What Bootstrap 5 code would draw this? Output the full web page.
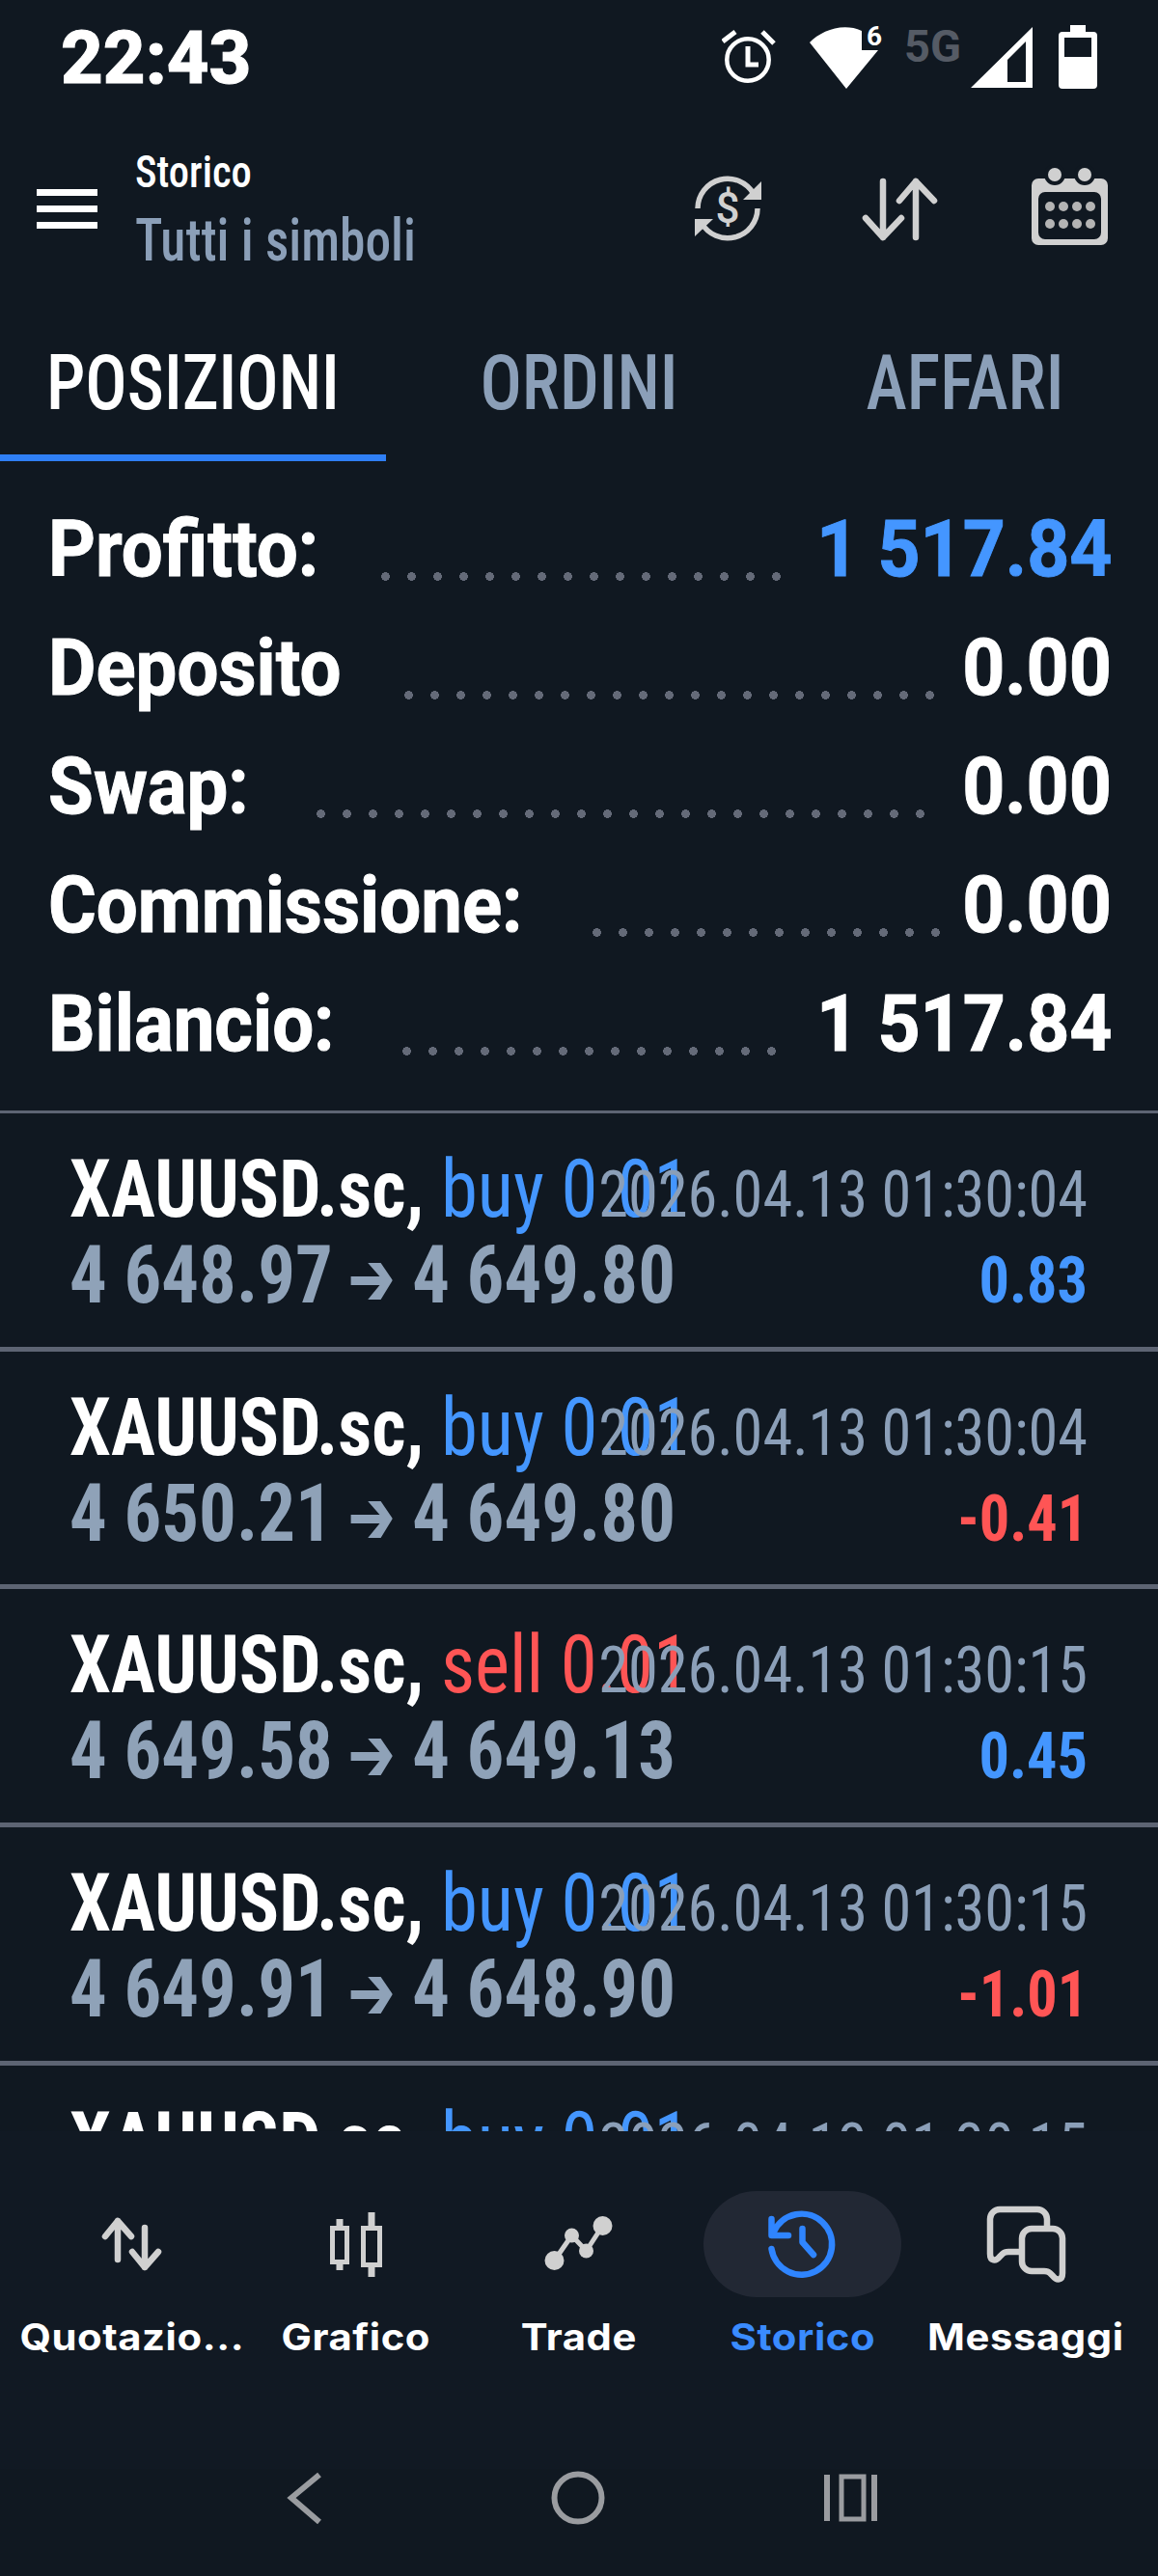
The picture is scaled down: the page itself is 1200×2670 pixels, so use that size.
<!DOCTYPE html>
<html lang="it">
<head>
  <meta charset="UTF-8">
  <meta name="viewport" content="width=device-width, initial-scale=1">
  <title>Storico</title>
  <link href="https://cdn.jsdelivr.net/npm/bootstrap@5.3.0/dist/css/bootstrap.min.css" rel="stylesheet">
  <style>
    html, body { background: #101821; }
    body { width: 1200px; height: 2670px; overflow: hidden; font-family: Roboto, "Liberation Sans", sans-serif; color: #fff; }
    svg { display: block; flex: none; }
    .cnd { font-stretch: 75%; }
    /* the app's font is narrower than Roboto's 75% width */
    .sq-l { display: inline-block; transform: scaleX(.925); transform-origin: 0 50%; }
    .sq-r { display: inline-block; transform: scaleX(.93); transform-origin: 100% 50%; }

    .stat-bar { height: 128px; padding: 26px 63px 0 63px; }
    .stat-time { font-size: 76px; font-weight: 800; line-height: 68px; -webkit-text-stroke: 1px #fff; }
    .ic-alarm { margin: 4px 35px 0 0; }
    .net-label { font-size: 47px; font-weight: 700; line-height: 44px; color: #555b65; width: 57px; margin: 0 12px 0 23px; }
    .ic-batt { margin-left: 27px; }

    .app-bar { height: 176px; padding: 0 52px 0 38px; }
    .burger { width: 63px; height: 41px; margin-right: 39px; border-top: 7px solid #fff; border-bottom: 7px solid #fff; }
    .burger::after { content: ""; display: block; height: 7px; margin-top: 10px; background: #fff; }
    .app-text { padding-top: 6px; }
    .app-sub { font-size: 46px; font-weight: 500; line-height: 50px; }
    .app-title { font-size: 61px; font-weight: 500; line-height: 72px; margin-top: 10px; color: #8b9fb8; }
    .app-title .sq-l { transform: scaleX(.875); }
    .ic-sort { margin-left: 100px; }
    .ic-cal { margin-left: 95px; }

    .tab-item { height: 174px; font-size: 80px; font-weight: 500; line-height: 187px; color: #8b9fb8; text-align: center; }
    .tab-on { color: #fff; border-bottom: 7px solid #2f7ff5; }
    .tab-txt { display: inline-block; transform: scaleX(.9); }

    .totals { height: 673px; padding: 30px 48px 0 50px; }
    .tot-row { height: 123px; font-size: 81px; font-weight: 700; line-height: 123px; -webkit-text-stroke: 1px currentColor; }
    .tot-label { display: inline-block; transform: scaleX(.94); transform-origin: 0 50%; }
    .tot-val { display: inline-block; transform: scaleX(.95); transform-origin: 100% 50%; }
    .dot-wrap { padding-left: 26px; }
    .dots { height: 9px; margin-top: 85px; background: radial-gradient(circle 4.5px at 13.5px 4.5px, #646a78 96%, transparent) repeat-x 0 0 / 27px 9px; }
    .val-blue { color: #4496ff; }

    .trades { height: 1058px; overflow: hidden; }
    .trade { height: 246.67px; padding: 34px 73px 0 72px; border-top: 5px solid #5d6473; }
    .trade:first-child { height: 244.67px; border-top-width: 3px; }
    .line-a, .line-b { height: 89px; line-height: 89px; white-space: nowrap; }
    .tr-sym { width: 0; font-size: 83px; }
    .tr-sym b { font-weight: 700; }
    .tr-date { font-size: 67px; color: #8b9fb8; }
    .tr-price { font-size: 83px; font-weight: 700; color: #8fa2b8; }
    .tr-arrow { display: inline-block; margin: 0 22px 0 20px; vertical-align: 3px; }
    .tr-pl { font-size: 67px; font-weight: 700; }
    .side-buy, .pl-up { color: #4496ff; }
    .side-sell, .pl-down { color: #ff5555; }

    .tabbar { padding: 62px 21px 0; background: #111923; height: 350px; }
    .tab-btn { width: 231.6px; text-align: center; }
    .tab-ico { width: 205px; height: 110px; margin: 0 auto; border-radius: 55px; }
    .tab-ico-on { background: #222834; }
    .tab-lbl { font-family: Inter, "Open Sans", sans-serif; font-size: 38px; font-weight: 700; line-height: 46px; margin-top: 18px; letter-spacing: .5px; white-space: nowrap; transform: scaleX(1.1); }
    .tab-lbl-on { color: #3a8bff; }
    .sys-nav { margin-top: 112px; }
  </style>
</head>
<body>
  <!-- status bar -->
  <div class="stat-bar d-flex justify-content-between">
    <span class="stat-time">22:43</span>
    <div class="d-flex align-items-start">
      <svg class="ic-alarm" width="56" height="60" viewBox="0 0 56 60" fill="none" stroke="#fff" stroke-width="5">
        <circle cx="27" cy="32" r="21.7" stroke-width="4.5"/><path d="M27 18V37H38M1 13L14 3M42 3L54 15"/>
      </svg>
      <svg width="75" height="66" viewBox="0 0 75 66">
        <path fill="#fff" d="M38 66L0 18C12 6 34-3 54 6V26H71Z"/>
        <text x="59" y="21" font-size="28" font-weight="700" fill="#fff" font-family="Roboto">6</text>
      </svg>
      <span class="net-label">5G</span>
      <svg width="64" height="66" viewBox="0 0 64 66"><path fill="#fff" fill-rule="evenodd" d="M0 65L64 2V65ZM38 59H57V17L38 36Z"/></svg>
      <svg class="ic-batt" width="40" height="66" viewBox="0 0 40 66"><path fill="#fff" fill-rule="evenodd" d="M12 0H28V7H36A4 4 0 0 1 40 11V62A4 4 0 0 1 36 66H4A4 4 0 0 1 0 62V11A4 4 0 0 1 4 7H12ZM6 13V33H34V13Z"/></svg>
    </div>
  </div>

  <!-- app bar -->
  <div class="app-bar d-flex align-items-center">
    <div class="burger"></div>
    <div class="app-text flex-grow-1 cnd">
      <div class="app-sub"><span class="sq-l">Storico</span></div>
      <div class="app-title"><span class="sq-l">Tutti i simboli</span></div>
    </div>
    <svg width="72" height="72" viewBox="0 0 72 72" fill="none" stroke="#d0d0d0" stroke-width="5.5">
      <path d="M5 36A31 31 0 0 1 63 21M67 36A31 31 0 0 1 9 51"/>
      <path fill="#d0d0d0" stroke="none" d="M71 8V27H52ZM2 47H21L2 65Z"/>
      <text x="36" y="51" text-anchor="middle" font-size="44" font-weight="500" fill="#d0d0d0" stroke="none" font-family="Roboto">$</text>
    </svg>
    <svg class="ic-sort" width="84" height="72" viewBox="0 0 84 72" fill="none" stroke="#d0d0d0" stroke-width="6.5" stroke-linecap="round" stroke-linejoin="round">
      <path d="M25 8V66M7 46L25 66L44 46M59 66V8M42 28L59 8L78 28"/>
    </svg>
    <svg class="ic-cal" width="79" height="92" viewBox="0 0 79 92">
      <path fill="#d0d0d0" fill-rule="evenodd" d="M7 15H72A7 7 0 0 1 79 22V77A7 7 0 0 1 72 84H7A7 7 0 0 1 0 77V22A7 7 0 0 1 7 15ZM14 29A7 7 0 0 0 7 36V71A7 7 0 0 0 14 78H65A7 7 0 0 0 72 71V36A7 7 0 0 0 65 29Z"/>
      <circle cx="24" cy="11" r="11" fill="#101821"/><circle cx="55" cy="11" r="11" fill="#101821"/>
      <circle cx="24" cy="11" r="7" fill="#d0d0d0"/><circle cx="55" cy="11" r="7" fill="#d0d0d0"/>
      <g fill="#b4b4b4"><circle cx="19" cy="44" r="5"/><circle cx="33" cy="44" r="5"/><circle cx="47" cy="44" r="5"/><circle cx="61" cy="44" r="5"/><circle cx="19" cy="62" r="5"/><circle cx="33" cy="62" r="5"/><circle cx="47" cy="62" r="5"/><circle cx="61" cy="62" r="5"/></g>
    </svg>
  </div>

  <!-- tabs -->
  <div class="d-flex cnd">
    <div class="tab-item tab-on flex-fill w-100"><span class="tab-txt">POSIZIONI</span></div>
    <div class="tab-item flex-fill w-100"><span class="tab-txt">ORDINI</span></div>
    <div class="tab-item flex-fill w-100"><span class="tab-txt">AFFARI</span></div>
  </div>

  <div class="totals" id="totals"></div>
  <div class="trades" id="trades"></div>

  <!-- bottom tabs -->
  <div class="tabbar">
    <div class="d-flex">
      <div class="tab-btn">
        <div class="tab-ico"><svg width="205" height="110" fill="none" stroke="#d0d0d0" stroke-width="6.5" stroke-linecap="round" stroke-linejoin="round"><path d="M88 31V71M75 47L88 31L102 47M116 38V79M103 63L116 79L130 63"/></svg></div>
        <div class="tab-lbl">Quotazio...</div>
      </div>
      <div class="tab-btn">
        <div class="tab-ico"><svg width="205" height="110" fill="none" stroke="#d0d0d0"><path stroke-width="5" d="M78.500 38.500H93.500V73.500H78.500ZM110.500 38.500H127.500V76.500H110.500Z"/><path stroke-width="7" d="M86 29V36M86 76V82M119 22V36M119 79V89"/></svg></div>
        <div class="tab-lbl">Grafico</div>
      </div>
      <div class="tab-btn">
        <div class="tab-ico"><svg width="205" height="110" fill="#d0d0d0" stroke="#d0d0d0"><path fill="none" stroke-width="5" d="M77.500 72L95.500 46L110.500 62L127.500 36"/><circle cx="77.500" cy="72" r="10" stroke="none"/><circle cx="95.500" cy="46" r="7.500" stroke="none"/><circle cx="110.500" cy="62" r="7.500" stroke="none"/><circle cx="127.500" cy="36" r="10" stroke="none"/></svg></div>
        <div class="tab-lbl">Trade</div>
      </div>
      <div class="tab-btn">
        <div class="tab-ico tab-ico-on"><svg width="205" height="110" fill="none" stroke="#2f85ff" stroke-width="6.500" stroke-linecap="round" stroke-linejoin="round"><path d="M70.500 60A31.500 31.500 0 1 0 73 42M70.500 29V46H88M102.500 39V53L114 66"/></svg></div>
        <div class="tab-lbl tab-lbl-on">Storico</div>
      </div>
      <div class="tab-btn">
        <div class="tab-ico"><svg width="205" height="110" fill="none" stroke="#d0d0d0" stroke-width="6.500"><path d="M124 36V29A10 10 0 0 0 114 19H75A10 10 0 0 0 65 29V65C65 73 71 73 75 68L78 65C80 63 82 63 84 63H96"/><path d="M108 39H130A10 10 0 0 1 140 49V85C140 93 134 93 130 88L127 85C125 83 123 83 121 83H108A10 10 0 0 1 98 73V49A10 10 0 0 1 108 39Z"/></svg></div>
        <div class="tab-lbl">Messaggi</div>
      </div>
    </div>
    <!-- android nav -->
    <svg class="sys-nav" width="1158" height="70" viewBox="21 2555 1158 70" fill="none" stroke="#9a9ca0">
      <path stroke-width="6" d="M331 2563L302 2587L331 2612"/>
      <circle cx="599" cy="2587" r="24.500" stroke-width="6"/>
      <path stroke-width="6" d="M857 2563V2611M906 2563V2611"/><rect x="872" y="2565" width="23" height="44" stroke-width="5"/>
    </svg>
  </div>

  <script src="https://cdn.jsdelivr.net/npm/bootstrap@5.3.0/dist/js/bootstrap.bundle.min.js"></script>
  <script>
    // summary rows: label, number of dots, value
    const totals = [
      { label: "Profitto:", dots: 16, value: "1 517.84", cls: "val-blue" },
      { label: "Deposito", dots: 21, value: "0.00", cls: "" },
      { label: "Swap:", dots: 24, value: "0.00", cls: "" },
      { label: "Commissione:", dots: 14, value: "0.00", cls: "" },
      { label: "Bilancio:", dots: 15, value: "1 517.84", cls: "" }
    ];

    const trades = [
      { side: "buy", date: "2026.04.13 01:30:04", open: "4 648.97", close: "4 649.80", pl: "0.83" },
      { side: "buy", date: "2026.04.13 01:30:04", open: "4 650.21", close: "4 649.80", pl: "-0.41" },
      { side: "sell", date: "2026.04.13 01:30:15", open: "4 649.58", close: "4 649.13", pl: "0.45" },
      { side: "buy", date: "2026.04.13 01:30:15", open: "4 649.91", close: "4 648.90", pl: "-1.01" },
      { side: "buy", date: "2026.04.13 01:30:15", open: "4 649.91", close: "4 649.13", pl: "0.00" }
    ];

    const arrow = `<svg class="tr-arrow" width="47" height="38" viewBox="0 0 39 38" preserveAspectRatio="none"><path fill="#8fa2b8" d="M0 14H27L16 0H28L39 18L28 38H16L27 23H0Z"/></svg>`;

    document.getElementById("totals").innerHTML = totals.map(t => `
      <div class="tot-row d-flex">
        <span class="tot-label">${t.label}</span>
        <div class="dot-wrap flex-fill d-flex justify-content-center"><div class="dots" style="width:${t.dots * 27}px"></div></div>
        <span class="tot-val ${t.cls}">${t.value}</span>
      </div>`).join("");

    document.getElementById("trades").innerHTML = trades.map(t => `
      <div class="trade cnd">
        <div class="line-a d-flex justify-content-between align-items-baseline">
          <span class="tr-sym sq-l"><b>XAUUSD.sc,</b> <span class="side-${t.side}">${t.side} 0.01</span></span>
          <span class="tr-date sq-r">${t.date}</span>
        </div>
        <div class="line-b d-flex justify-content-between align-items-baseline">
          <span class="tr-price sq-l">${t.open}${arrow}${t.close}</span>
          <span class="tr-pl sq-r ${t.pl.startsWith("-") ? "pl-down" : "pl-up"}">${t.pl}</span>
        </div>
      </div>`).join("");
  </script>
</body>
</html>
